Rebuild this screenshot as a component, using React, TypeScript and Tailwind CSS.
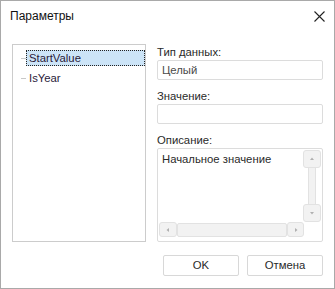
import React from "react";

const font = { fontFamily: '"Liberation Sans", Arial, sans-serif' };

function Field({ label, value }: { label: string; value?: string }) {
  return (
    <>
      <div className="h-[16px] text-[11.3px] leading-[16px] text-[#2a2a2a]">{label}</div>
      <div className="flex h-[20px] items-center rounded-[2px] border border-[#dcdcdc] px-[4px] text-[11.3px] text-[#4a4a4a]">
        {value}
      </div>
    </>
  );
}

function ScrollBtn({ dir, className }: { dir: "up" | "down" | "left" | "right"; className: string }) {
  const pts = {
    up: "2,5 4,2.5 6,5",
    down: "2,3 4,5.5 6,3",
    left: "5,2 2.5,4 5,6",
    right: "3,2 5.5,4 3,6",
  }[dir];
  return (
    <div className={`flex items-center justify-center rounded-[3px] border border-[#e2e2e2] bg-[#f2f2f2] ${className}`}>
      <svg width="8" height="8" viewBox="0 0 8 8">
        <polygon points={pts} fill="#b0b0b0" />
      </svg>
    </div>
  );
}

export default function App() {
  return (
    <div
      className="flex h-[289px] w-[335px] flex-col border border-[#a9a9a9] bg-white"
      style={font}
    >
      <div className="flex h-[30px] items-center justify-between pl-[9px] pr-[9px]">
        <span className="text-[12px] text-[#111]">Параметры</span>
        <svg width="11" height="11" viewBox="0 0 11 11">
          <path d="M0.5 0.5 L10.5 10.5 M10.5 0.5 L0.5 10.5" stroke="#222" strokeWidth="1.1" />
        </svg>
      </div>

      <div className="mt-[13px] flex gap-[11px] pl-[11px]">
        <div className="h-[198px] w-[134px] border border-[#cccccc] pt-[5px]">
          <div className="flex h-[16px] items-center">
            <div className="ml-[8px] h-px w-[5px] bg-[#c8c8c8]" />
            <div className="flex h-[16px] flex-1 items-center border border-dotted border-[#222] bg-[#cce4f7] pl-[2px] text-[11.3px] leading-[14px] text-[#2a1a3a]">
              StartValue
            </div>
          </div>
          <div className="mt-[4px] flex h-[16px] items-center">
            <div className="ml-[8px] h-px w-[5px] bg-[#c8c8c8]" />
            <div className="pl-[3px] text-[11.3px] leading-[14px] text-[#2a1a3a]">IsYear</div>
          </div>
        </div>

        <div className="flex w-[166px] flex-col">
          <Field label="Тип данных:" value="Целый" />
          <div className="h-[8px]" />
          <Field label="Значение:" />
          <div className="h-[8px]" />
          <div className="h-[16px] text-[11.3px] leading-[16px] text-[#2a2a2a]">Описание:</div>
          <div className="relative h-[94px] rounded-[2px] border border-[#dcdcdc]">
            <div className="pl-[4px] pt-[3px] text-[11.3px] leading-[14px] text-[#2a2a2a]">
              Начальное значение
            </div>
            <div className="absolute right-[1px] top-[1px] flex h-[72px] w-[18px] flex-col items-center">
              <ScrollBtn dir="up" className="h-[18px] w-[18px]" />
              <div className="h-[36px] w-[8px] border-x border-[#e2e2e2] bg-[#f2f2f2]" />
              <ScrollBtn dir="down" className="h-[18px] w-[18px]" />
            </div>
            <div className="absolute bottom-[4px] left-[1px] flex h-[15px] w-[145px] items-center">
              <ScrollBtn dir="left" className="h-[15px] w-[18px]" />
              <div className="h-[14px] flex-1 rounded-[2px] border border-[#e2e2e2] bg-[#f2f2f2]" />
              <ScrollBtn dir="right" className="h-[15px] w-[17px]" />
            </div>
          </div>
        </div>
      </div>

      <div className="mt-[13px] flex justify-end gap-[8px] pr-[11px]">
        <button className="h-[21px] w-[76px] rounded-[2px] border border-[#d8d8d8] bg-white text-[11.3px] text-[#2a2a2a]">
          OK
        </button>
        <button className="h-[21px] w-[76px] rounded-[2px] border border-[#d8d8d8] bg-white text-[11.3px] text-[#2a2a2a]">
          Отмена
        </button>
      </div>
    </div>
  );
}
